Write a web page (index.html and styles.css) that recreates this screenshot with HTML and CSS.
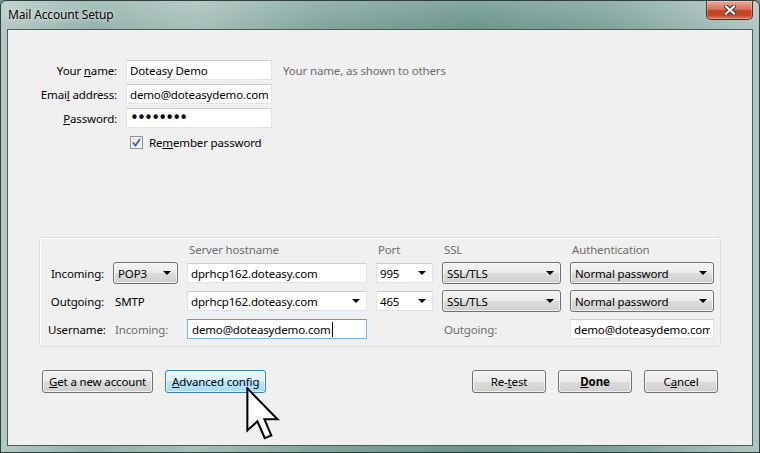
FILE: index.html
```html
<!DOCTYPE html>
<html lang="en">
<head>
  <meta charset="UTF-8">
  <title>Mail Account Setup</title>
  <link rel="stylesheet" href="styles.css">
</head>
<body>
  <div class="window">
    <div class="titlebar">
      <span class="title">Mail Account Setup</span>
      <span class="close">
        <svg width="12" height="10" viewBox="0 0 12 10">
          <path d="M2 1.5 L10 8.5 M10 1.5 L2 8.5" stroke="#3a3a3a" stroke-width="4.2" stroke-linecap="square"/>
          <path d="M2 1.5 L10 8.5 M10 1.5 L2 8.5" stroke="#fff" stroke-width="2.2" stroke-linecap="square"/>
        </svg>
      </span>
    </div>

    <div class="client">
      <div class="identity">
        <label class="lbl">Your <u>n</u>ame:</label>
        <input class="text" type="text" value="Doteasy Demo">
        <span class="hint">Your name, as shown to others</span>

        <label class="lbl">Emai<u>l</u> address:</label>
        <input class="text" type="text" value="demo@doteasydemo.com">
        <span></span>

        <label class="lbl"><u>P</u>assword:</label>
        <input class="text pass" type="password" value="doteasy1">
        <span></span>

        <span></span>
        <label class="check">
          <span class="box">
            <svg width="9" height="9" viewBox="0 0 9 9"><path d="M1 4.5 L3.5 7.5 L8 1" fill="none" stroke="#45609a" stroke-width="1.8"/></svg>
          </span>
          <span>Re<u>m</u>ember password</span>
        </label>
      </div>

      <div class="servers">
        <span></span>
        <span></span>
        <span class="head">Server hostname</span>
        <span class="head">Port</span>
        <span class="head">SSL</span>
        <span class="head">Authentication</span>

        <span class="rowlbl">Incoming:</span>
        <div class="select">POP3<i class="arrow"></i></div>
        <input class="text" type="text" value="dprhcp162.doteasy.com">
        <div class="combo">995<i class="arrow"></i></div>
        <div class="select">SSL/TLS<i class="arrow"></i></div>
        <div class="select">Normal password<i class="arrow"></i></div>

        <span class="rowlbl">Outgoing:</span>
        <span class="plain">SMTP</span>
        <div class="combo">dprhcp162.doteasy.com<i class="arrow"></i></div>
        <div class="combo">465<i class="arrow"></i></div>
        <div class="select">SSL/TLS<i class="arrow"></i></div>
        <div class="select">Normal password<i class="arrow"></i></div>

        <span class="rowlbl">Username:</span>
        <span class="plain muted">Incoming:</span>
        <div class="field focus">demo@doteasydemo.com<i class="caret"></i></div>
        <span></span>
        <span class="plain muted">Outgoing:</span>
        <input class="text" type="text" value="demo@doteasydemo.com">
      </div>

      <div class="actions">
        <div class="group">
          <button class="btn"><u>G</u>et a new account</button>
          <button class="btn hover"><u>A</u>dvanced config</button>
        </div>
        <div class="group">
          <button class="btn">Re-<u>t</u>est</button>
          <button class="btn default"><u>D</u>one</button>
          <button class="btn">C<u>a</u>ncel</button>
        </div>
      </div>

      <svg class="cursor" width="34" height="53" viewBox="0 0 12.5 19.5">
        <path d="M0.5 0.5 V16 L4.2 12.6 L6.9 18.8 L9.3 17.8 L6.8 11.9 H11.6 Z" fill="#fff" stroke="#000" stroke-width="0.75" stroke-linejoin="miter"/>
      </svg>
    </div>
  </div>
</body>
</html>
```

FILE: styles.css
```css
* {
  box-sizing: border-box;
}
body {
  margin: 0;
  font-family: "Noto Sans", "Open Sans", sans-serif;
  font-size: 11.5px;
  letter-spacing: -0.15px;
  color: #000;
  background: #6f978e;
}
.window {
  width: 760px;
  height: 453px;
  display: flex;
  flex-direction: column;
  padding: 0 6px 6px 6px;
  border: 1px solid #2f3f3c;
  border-radius: 6px 6px 0 0;
  background:
    linear-gradient(180deg, rgba(255, 255, 255, 0.18), rgba(255, 255, 255, 0) 30px),
    linear-gradient(90deg, #b4c9c5 0%, #93b2ab 12%, #a5bfb9 26%, #7fa49b 42%, #6a958a 62%, #7ca299 80%, #b1c6c2 100%);
}
.titlebar {
  height: 28px;
  display: flex;
  justify-content: space-between;
  align-items: flex-start;
}
.title {
  padding: 6px 0 0 1px;
  font-size: 12px;
  line-height: 16px;
  text-shadow: 0 0 6px rgba(255, 255, 255, 0.8), 0 0 2px rgba(255, 255, 255, 0.6);
}
.close {
  width: 47px;
  height: 19px;
  display: flex;
  align-items: center;
  justify-content: center;
  border: 1px solid #5a2c22;
  border-top: none;
  border-radius: 0 0 5px 5px;
  background: linear-gradient(180deg, #e8ab9c 0%, #d8735c 45%, #c1401f 55%, #c4482a 80%, #e08062 100%);
  box-shadow: inset 0 0 0 1px rgba(255, 255, 255, 0.25);
}
.client {
  position: relative;
  flex: 1;
  background: #f0f0f0;
  border: 1px solid #4a5b58;
}

/* identity section */
.identity {
  display: grid;
  grid-template-columns: 97px 146px auto;
  grid-auto-rows: 20px;
  column-gap: 9px;
  row-gap: 4px;
  margin: 30px 0 0 12px;
  align-items: center;
}
.lbl {
  text-align: right;
}
.hint {
  margin-left: 2px;
  color: #6d6d6d;
}
.text {
  width: 100%;
  height: 20px;
  padding: 0 3px;
  font: inherit;
  letter-spacing: inherit;
  color: #000;
  background: #fff;
  border: 1px solid #e2e3ea;
  border-top-color: #c8ccd4;
  outline: none;
}
.pass {
  font-family: "DejaVu Sans", sans-serif;
  font-size: 15px;
  letter-spacing: -1.8px;
}
.check {
  display: flex;
  align-items: center;
  gap: 6px;
  padding-left: 4px;
}
.box {
  width: 13px;
  height: 13px;
  display: flex;
  align-items: center;
  justify-content: center;
  border: 1px solid #8e8f8f;
  background: linear-gradient(135deg, #dedede, #fbfbfb);
  box-shadow: inset 0 0 0 1px #f4f4f4;
}

/* server settings */
.servers {
  display: grid;
  grid-template-columns: 56px 65px 180px 57px 119px 144px;
  grid-template-rows: 14px 22px 22px 22px;
  column-gap: 9px;
  row-gap: 6px;
  align-items: center;
  margin: 85px 31px 0 31px;
  padding: 4px 0 6px 8px;
  border: 1px solid #d5dfe5;
  border-radius: 3px;
  box-shadow: inset 1px 1px 0 #fff;
}
.head {
  padding-left: 2px;
  color: #6d6d6d;
  line-height: 15px;
}
.rowlbl {
  text-align: right;
}
.plain {
  padding-left: 2px;
}
.muted {
  color: #6d6d6d;
}
.select,
.combo,
.field {
  position: relative;
  height: 22px;
  display: flex;
  align-items: center;
  padding: 0 18px 0 4px;
  white-space: nowrap;
  overflow: hidden;
}
.select {
  border: 1px solid #707070;
  border-radius: 3px;
  background: linear-gradient(180deg, #f2f2f2 0%, #ebebeb 50%, #dddddd 50%, #cfcfcf 100%);
  box-shadow: inset 0 0 0 1px rgba(255, 255, 255, 0.7);
}
.combo,
.field {
  height: 20px;
  padding-left: 3px;
  background: #fff;
  border: 1px solid #e2e3ea;
  border-top-color: #c8ccd4;
}
.field {
  padding-left: 4px;
}
.focus {
  border-color: #7eb4ea;
  border-top-color: #569de5;
}
.caret {
  width: 1px;
  height: 15px;
  background: #000;
  margin-left: 1px;
}
.arrow {
  position: absolute;
  right: 6px;
  top: 50%;
  margin-top: -2px;
  border-left: 4px solid transparent;
  border-right: 4px solid transparent;
  border-top: 4px solid #000;
}

/* buttons */
.actions {
  display: flex;
  justify-content: space-between;
  margin-top: 23px;
  padding: 0 34px;
}
.group {
  display: flex;
  gap: 12px;
}
.btn {
  height: 23px;
  min-width: 74px;
  padding: 0 6px;
  font: inherit;
  letter-spacing: inherit;
  color: #000;
  border: 1px solid #707070;
  border-radius: 3px;
  background: linear-gradient(180deg, #f2f2f2 0%, #ebebeb 50%, #dddddd 50%, #cfcfcf 100%);
  box-shadow: inset 0 0 0 1px rgba(255, 255, 255, 0.7);
}
.btn.hover {
  border-color: #3c7fb1;
  background: linear-gradient(180deg, #eaf6fd 0%, #d9f0fc 50%, #bee6fd 50%, #a7d9f5 100%);
}
.btn.default {
  font-weight: bold;
}
.cursor {
  position: absolute;
  left: 238px;
  top: 357px;
}
```
